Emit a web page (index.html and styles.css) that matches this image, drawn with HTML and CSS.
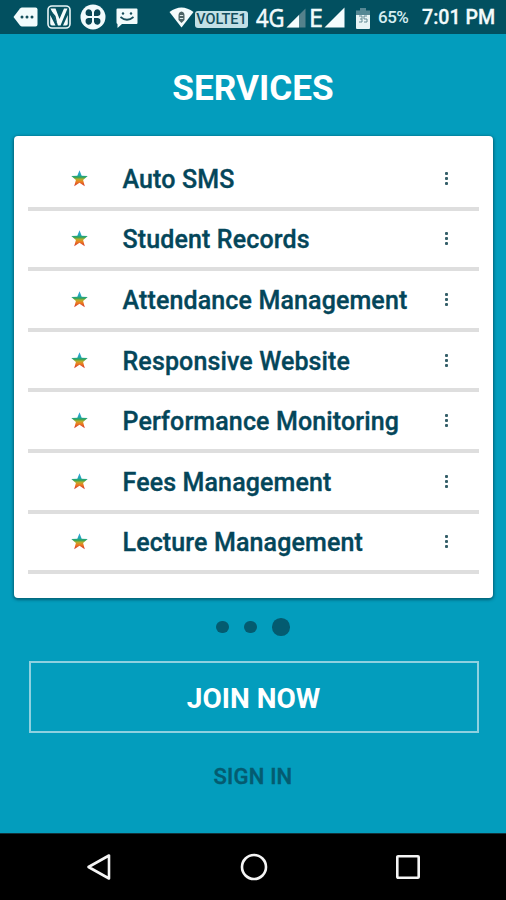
FILE: index.html
```html
<!DOCTYPE html>
<html lang="en">
<head>
<meta charset="utf-8">
<title>Services</title>
<link rel="stylesheet" href="styles.css">
</head>
<body>
<svg class="defs" aria-hidden="true">
  <defs>
    <linearGradient id="rainbow" x1="0" y1="0" x2="0" y2="1">
      <stop offset="0" stop-color="#3aa0df"/>
      <stop offset=".3" stop-color="#1fa8b5"/>
      <stop offset=".43" stop-color="#2aa35e"/>
      <stop offset=".56" stop-color="#b6ad2c"/>
      <stop offset=".72" stop-color="#ee7d20"/>
      <stop offset="1" stop-color="#cf3030"/>
    </linearGradient>
    <symbol id="star" viewBox="0 0 17 17">
      <path fill="url(#rainbow)" d="M8.500 .3 10.700 5.800 16.700 6 12.100 9.900 13.800 16.200 8.500 12.700 3.200 16.200 4.900 9.900 .3 6 6.300 5.800Z"/>
    </symbol>
  </defs>
</svg>
<div class="screen">
  <header class="status">
    <div class="notices">
      <svg width="25" height="20" viewBox="0 0 25 20"><path fill="#f2fbfc" d="M.5 10 7 1.500Q8 .5 9 .5H22.500Q24.500 .5 24.500 2.500V17.500Q24.500 19.500 22.500 19.500H9Q8 19.500 7 18.500Z"/><g fill="#164f5c"><circle cx="9" cy="10" r="1.500"/><circle cx="14" cy="10" r="1.500"/><circle cx="19" cy="10" r="1.500"/></g></svg>
      <svg width="24" height="24" viewBox="0 0 24 24"><rect x="1" y="1" width="22" height="22" rx="4" fill="#075260" stroke="#e8f5f7" stroke-width="1.600"/><path fill="#f4fbfc" d="M3.500 3.500H8.500L12.500 14 17 3.500H20.500L13.500 20.500H11Z"/><path fill="#f4fbfc" d="M3.200 10 8.500 20.500H5Q3.200 20.500 3.200 18.500ZM20.800 10 16 20.500H19Q20.800 20.500 20.800 18.500Z"/><path fill="#075260" d="M3.500 5 10.500 19.500 8.500 11Z"/></svg>
      <svg width="26" height="26" viewBox="0 0 26 26"><circle cx="13" cy="13" r="12.500" fill="#f2fbfc"/><g fill="#0b4654"><path d="M12 12V8Q11 4.500 7.500 5.500 4.500 7.500 6 11L8 12Z"/><path d="M14 12V8Q15 4.500 18.500 5.500 21.500 7.500 20 11L18 12Z"/><path d="M12 14V18Q11 21.500 7.500 20.500 4.500 18.500 6 15L8 14Z"/><path d="M14 14V18Q15 21.500 18.500 20.500 21.500 18.500 20 15L18 14Z"/></g></svg>
      <svg width="22" height="20" viewBox="0 0 22 20"><path fill="#f2fbfc" d="M1.500 .5H20.500Q21.500 .5 21.500 1.500V15Q21.500 16 20.500 16H6L1.500 20V16Q.5 15.500 .5 14.500V1.500Q.5 .5 1.500 .5Z"/><circle cx="7" cy="5.500" r="1.200" fill="#164f5c"/><circle cx="15" cy="5.500" r="1.200" fill="#164f5c"/><path d="M4.500 9Q11 14.500 17.500 9" fill="none" stroke="#164f5c" stroke-width="1.700"/></svg>
    </div>
    <svg class="wifi" width="25" height="21" viewBox="0 0 25 21"><path fill="#f5fcfd" d="M.5 5Q12.500 -4 24.500 5L12.500 20.500Z"/><path fill="#4e6466" d="M12.500 4.500Q15.500 5 15.500 8.500V13L12.500 16 9.500 13V8.500Q9.500 5 12.500 4.500Z"/><path d="M10.800 8.500H14.200M10.800 11.500H14.200" stroke="#dce8e8" stroke-width="1.200"/></svg>
    <span class="volte">VOLTE1</span>
    <span class="net net-4g">4G</span>
    <svg class="sig1" width="20" height="20" viewBox="0 0 20 20"><path fill="#54818b" d="M19.500 .5V19.500H.5Z"/><path fill="#f5fcfd" d="M13 7V19.500H.5Z"/></svg>
    <span class="net net-e">E</span>
    <svg class="sig2" width="21" height="21" viewBox="0 0 21 21"><path fill="#f5fcfd" d="M20.500 .5V20.500H.5Z"/></svg>
    <svg class="battery" width="14" height="21" viewBox="0 0 14 21"><path fill="#568894" d="M4 0H10V2.500H14V8H0V2.500H4Z"/><path fill="#e8f4f5" d="M0 7H14V20Q14 21 13 21H1Q0 21 0 20Z"/><path d="M3 8H6V11H4M6 11V14H3M8 8H11M8 8V11H11V14H8" fill="none" stroke="#658b94" stroke-width="1"/></svg>
    <span class="percent">65%</span>
    <span class="clock">7:01 PM</span>
  </header>
  <main>
    <h1>SERVICES</h1>
    <ul class="card">
      <li><svg class="star"><use href="#star"/></svg><span class="name">Auto SMS</span><span class="more"><i></i><i></i><i></i></span></li>
      <li><svg class="star"><use href="#star"/></svg><span class="name">Student Records</span><span class="more"><i></i><i></i><i></i></span></li>
      <li><svg class="star"><use href="#star"/></svg><span class="name">Attendance Management</span><span class="more"><i></i><i></i><i></i></span></li>
      <li><svg class="star"><use href="#star"/></svg><span class="name">Responsive Website</span><span class="more"><i></i><i></i><i></i></span></li>
      <li><svg class="star"><use href="#star"/></svg><span class="name">Performance Monitoring</span><span class="more"><i></i><i></i><i></i></span></li>
      <li><svg class="star"><use href="#star"/></svg><span class="name">Fees Management</span><span class="more"><i></i><i></i><i></i></span></li>
      <li><svg class="star"><use href="#star"/></svg><span class="name">Lecture Management</span><span class="more"><i></i><i></i><i></i></span></li>
    </ul>
    <div class="pager"><i></i><i></i><i class="current"></i></div>
    <button class="join">JOIN NOW</button>
    <a class="signin">SIGN IN</a>
  </main>
  <nav>
    <svg width="26" height="28" viewBox="0 0 26 28"><path d="M2.500 14 23 2.500V25.500Z" fill="none" stroke="#f5f5f5" stroke-width="2.600" stroke-linejoin="round"/></svg>
    <svg width="28" height="28" viewBox="0 0 28 28"><circle cx="14" cy="14" r="12" fill="none" stroke="#f5f5f5" stroke-width="2.600"/></svg>
    <svg width="26" height="26" viewBox="0 0 26 26"><rect x="2.300" y="2.300" width="21.400" height="21.400" rx=".8" fill="none" stroke="#f5f5f5" stroke-width="2.600"/></svg>
  </nav>
</div>
</body>
</html>
```
FILE: styles.css
```css
* { box-sizing: border-box; }
body { margin: 0; font-family: Roboto, "Liberation Sans", sans-serif; }
svg { display: block; flex: none; }
.defs { position: absolute; width: 0; height: 0; }
.screen { width: 506px; height: 900px; display: flex; flex-direction: column; background: #039dbd; overflow: hidden; }

.status { height: 34px; flex: none; display: flex; align-items: center; background: #025060; color: #f2fbfc; white-space: nowrap; }
.notices { display: flex; align-items: center; margin-left: 13px; width: 156px; }
.notices svg:nth-child(2) { margin-left: 9px; }
.notices svg:nth-child(3) { margin-left: 9px; }
.notices svg:nth-child(4) { margin-left: 10px; margin-top: 2px; }
.wifi { margin-top: 1px; }
.volte { width: 53px; height: 17px; margin: 5px 0 0 1px; border-radius: 3px; background: #c3e0e6; color: #124e5d; font-size: 14.500px; font-weight: 500; line-height: 18px; text-align: center; }
.net { font-family: "Open Sans", sans-serif; font-size: 25px; line-height: 34px; font-weight: 400; -webkit-text-stroke: .6px; transform-origin: left; }
.net-4g { width: 29px; margin-left: 8px; transform: scaleX(.88); }
.sig1 { margin: 1px 0 0 1px; }
.net-e { width: 14px; margin-left: 3px; }
.sig2 { margin-left: 1px; }
.battery { margin-left: 11px; margin-top: 2px; }
.percent { width: 32px; margin-left: 8px; font-size: 17px; line-height: 36px; font-weight: 500; letter-spacing: -.5px; color: #d6eef1; }
.clock { margin-left: 12px; font-size: 19.600px; line-height: 37px; font-weight: 500; -webkit-text-stroke: .3px; }

main { flex: 1; display: flex; flex-direction: column; align-items: center; }
h1 { margin: 33px 0 0; height: 42px; line-height: 42px; font-size: 35.200px; font-weight: 700; color: #fff; }
.card { list-style: none; width: 479px; height: 462px; margin: 27px 0 0 1px; padding: 14px 14px 0 14px; border-radius: 4px; background: #fff; box-shadow: 0 1px 3px 1px rgba(0, 60, 75, .6); }
.card li { height: 60.600px; display: flex; align-items: center; border-bottom: 4px solid #dedede; color: #04465a; }
.star { width: 17px; height: 17px; margin-left: 43px; }
.name { margin-left: 34.500px; width: 315px; font-size: 25px; line-height: 30px; padding-top: 3px; font-weight: 500; letter-spacing: .13px; -webkit-text-stroke: .35px; white-space: nowrap; }
.more { display: flex; flex-direction: column; gap: 2px; margin-left: 7.500px; }
.more i { width: 3px; height: 3px; border-radius: 1px; background: #355f69; }
.pager { height: 18px; margin-top: 20px; display: flex; align-items: center; gap: 15.500px; }
.pager i { width: 12.500px; height: 12.500px; border-radius: 50%; background: #045b70; }
.pager .current { width: 17.500px; height: 17.500px; }
.join { width: 450px; height: 72px; margin: 25px 0 0 1px; padding: 3px 0 0; border: 2px solid #8fd1e0; background: transparent; color: #fff; font: 700 28px/32px Roboto, sans-serif; }
.signin { margin-top: 31px; line-height: 26px; font-size: 22px; font-weight: 500; letter-spacing: .2px; -webkit-text-stroke: .4px; color: #045b70; }

nav { height: 67px; flex: none; display: flex; justify-content: space-between; align-items: center; background: #000; padding: 0 85px 0 86px; border-top: 1px solid #12323a; }
```
